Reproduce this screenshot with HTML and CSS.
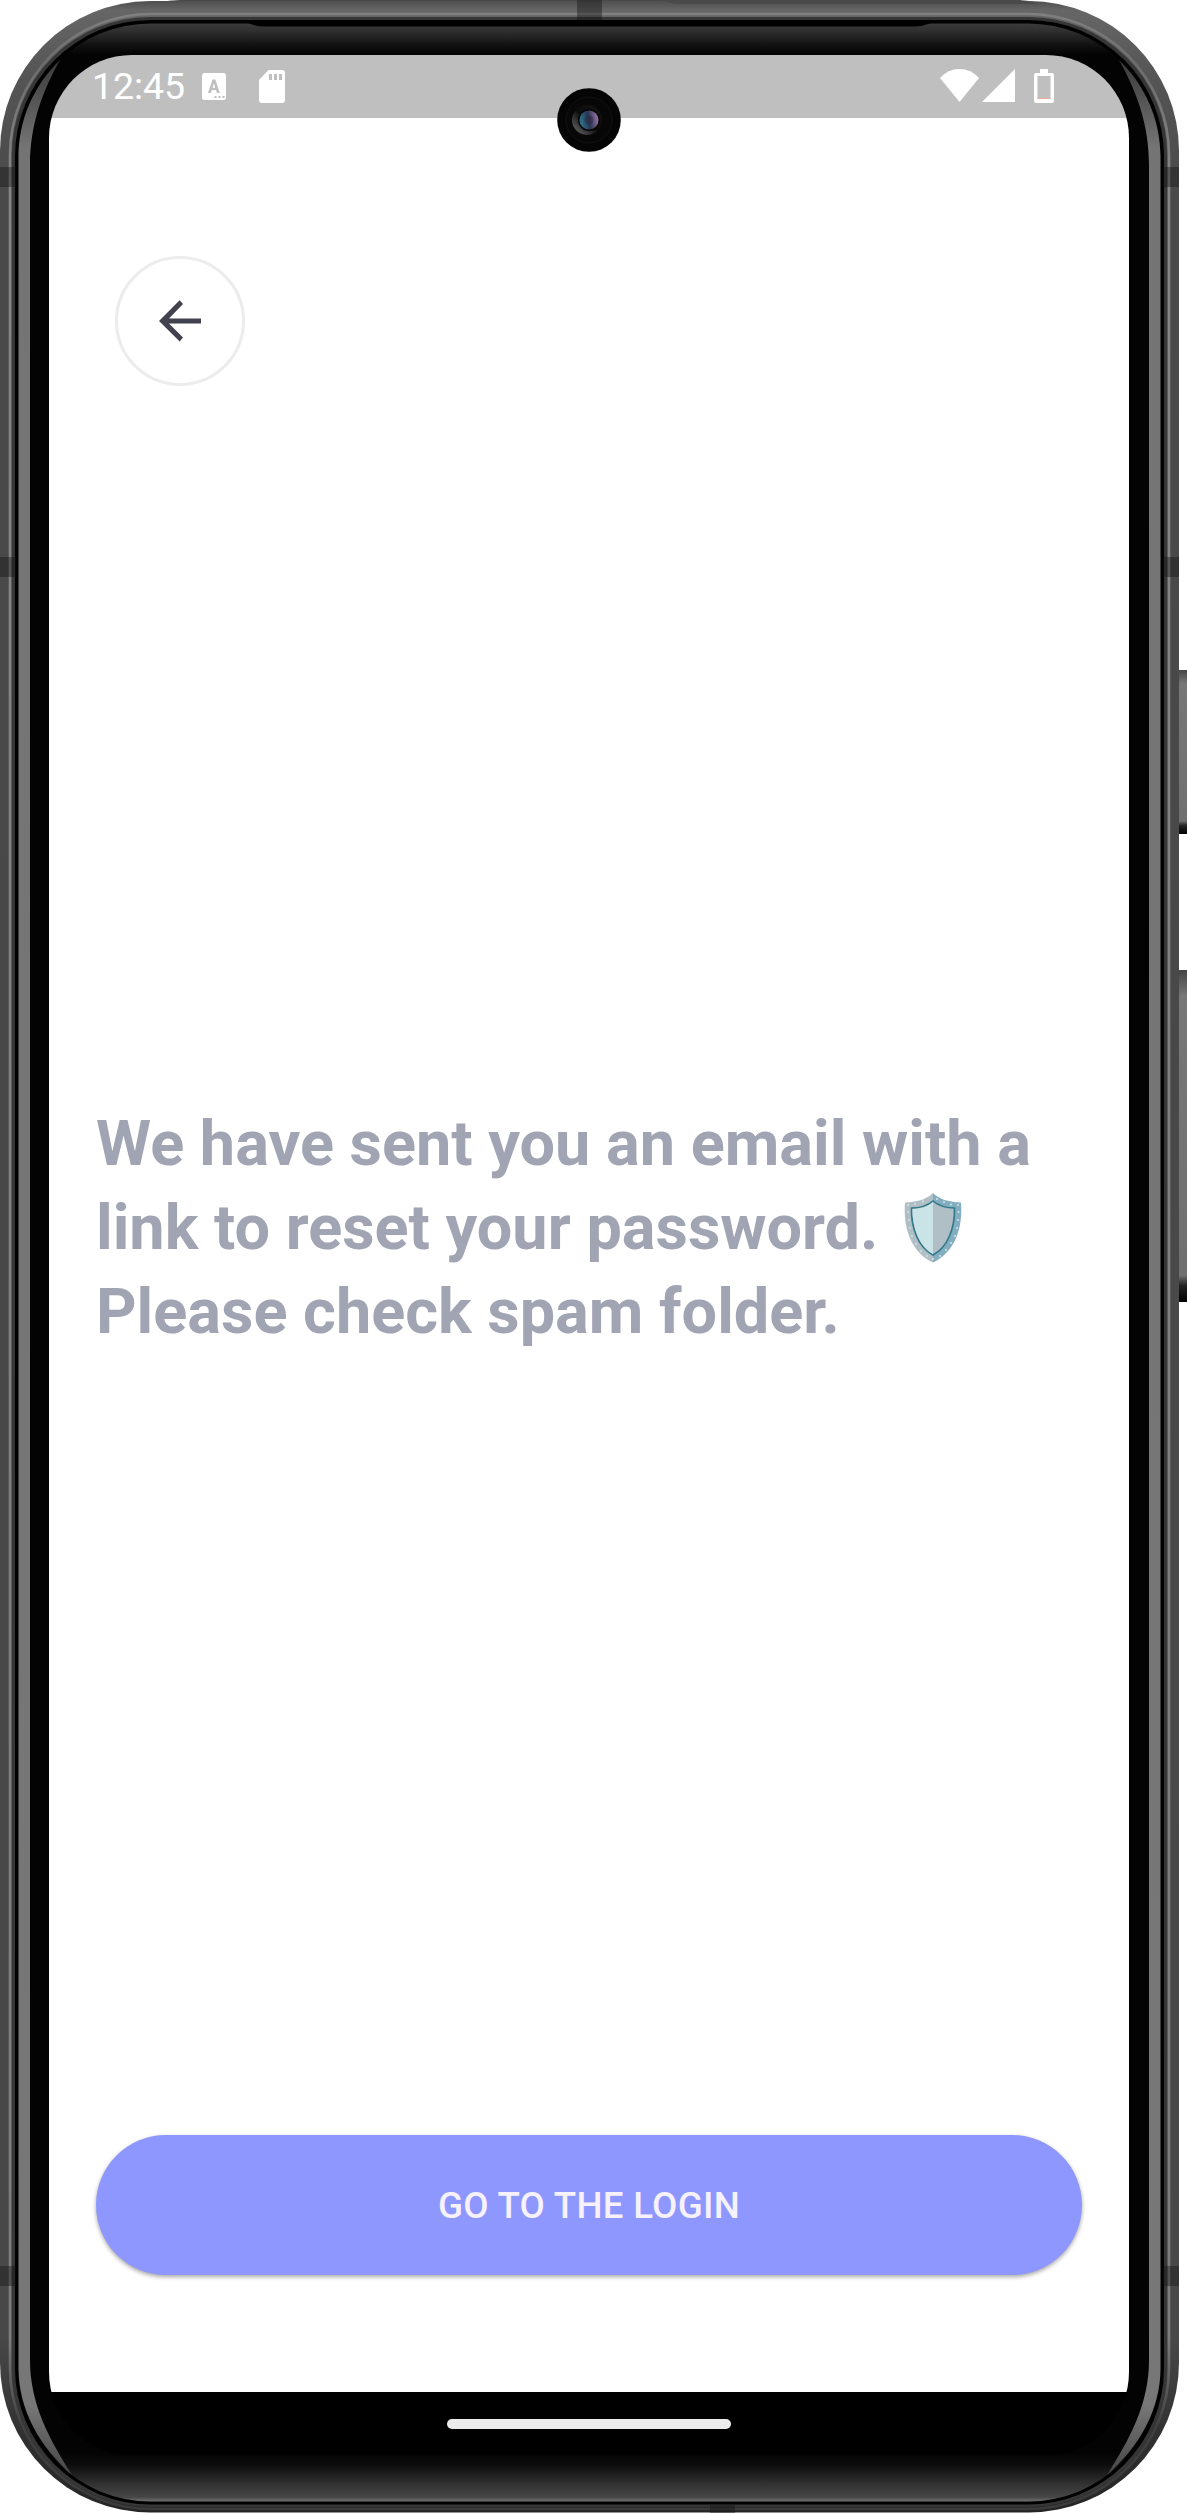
FILE: index.html
```html
<!DOCTYPE html>
<html lang="en">
<head>
<meta charset="utf-8">
<title>Reset password</title>
<link rel="stylesheet" href="styles.css">
</head>
<body>
<div class="device">
  <svg class="shell" viewBox="0 0 1187 2513" aria-hidden="true">
    <defs>
      <linearGradient id="edge" gradientUnits="userSpaceOnUse" x1="0" y1="0" x2="0" y2="2513">
        <stop offset="0" stop-color="#4c4c4c"/><stop offset=".004" stop-color="#666"/><stop offset=".03" stop-color="#555"/><stop offset=".08" stop-color="#494949"/>
        <stop offset=".93" stop-color="#484848"/><stop offset=".97" stop-color="#303030"/><stop offset="1" stop-color="#252525"/>
      </linearGradient>
      <linearGradient id="glint" gradientUnits="userSpaceOnUse" x1="0" y1="0" x2="0" y2="2513">
        <stop offset="0" stop-color="#858585"/><stop offset=".025" stop-color="#6d6d6d"/><stop offset=".07" stop-color="#858585"/>
        <stop offset=".93" stop-color="#7c7c7c"/><stop offset=".965" stop-color="#404040"/><stop offset="1" stop-color="#3b3b3b"/>
      </linearGradient>
      <linearGradient id="face" gradientUnits="userSpaceOnUse" x1="0" y1="23" x2="0" y2="2502">
        <stop offset="0" stop-color="#3b3b3b"/><stop offset=".003" stop-color="#303030"/><stop offset=".009" stop-color="#111"/><stop offset=".013" stop-color="#030303"/>
        <stop offset=".98" stop-color="#030303"/><stop offset=".985" stop-color="#0c0c0c"/><stop offset=".993" stop-color="#333"/><stop offset=".998" stop-color="#454545"/><stop offset="1" stop-color="#777"/>
      </linearGradient>
      <linearGradient id="rail" gradientUnits="userSpaceOnUse" x1="0" y1="50" x2="0" y2="2478">
        <stop offset="0" stop-color="#333"/><stop offset=".04" stop-color="#747474"/><stop offset=".97" stop-color="#777"/><stop offset="1" stop-color="#444"/>
      </linearGradient>
      <linearGradient id="key" x1="0" y1="0" x2="0" y2="1">
        <stop offset="0" stop-color="#444"/><stop offset=".08" stop-color="#777"/><stop offset=".92" stop-color="#707070"/><stop offset=".95" stop-color="#222"/><stop offset="1" stop-color="#000"/>
      </linearGradient>
    </defs>
    <rect x="1177" y="670" width="14" height="164" rx="3" fill="url(#key)"/>
    <rect x="1177" y="970" width="14" height="332" rx="3" fill="url(#key)"/>
    <path d="M160 3C168 0 175 0 190 0H1015C1023 0 1030 1 1040 3Z" fill="#4a4a4a"/>
    <rect x="0" y="1" width="1179" height="2511.500" rx="150" fill="url(#edge)"/>
    <path d="M660 0H1021V1Q1030 3 1040 4H675Z" fill="#4a4a4a"/>
    <rect x="12" y="17" width="1155" height="2490" rx="138" fill="#363636"/>
    <rect x="10" y="14" width="1159" height="2495" rx="141" fill="none" stroke="url(#glint)" stroke-width="2.600"/>
    <rect x="15" y="20" width="1149" height="2484.500" rx="136" fill="#000"/>
    <rect x="18" y="23.500" width="1143" height="2478" rx="133" fill="url(#face)"/>
    <path d="M248 23Q256 26.500 264 26.500H915Q923 26.500 931 23Z" fill="#000"/>
    <path id="band" d="M60 60C33 86 18.500 121 18.500 157V2368C18.500 2410 40 2447 72 2475C50 2440 30 2405 30 2360V165C30 125 42 92 60 60Z" fill="url(#rail)"/>
    <use href="#band" transform="matrix(-1 0 0 1 1179 0)"/>
    <g fill="#111" fill-opacity=".4">
      <path d="M0 167H16V187H0zM0 557H16V577H0zM0 2266H16V2286H0zM1163 167H1179V187H1163zM1163 557H1179V577H1163zM1163 2266H1179V2286H1163zM577 0H602V20H577zM710 2505H735V2513H710z"/>
    </g>
  </svg>

  <main class="screen">
    <header class="status">
      <span class="clock">12:45</span>
      <svg class="ico-lang" viewBox="0 0 24 27"><rect width="24" height="27" rx="2.500" fill="#fff"/><path d="M6 20L10.500 6.500H13.300L17.800 20H15L14 17H9.800L8.800 20ZM10.500 14.700H13.200L11.900 10.300Z" fill="#bfbfbf"/><path d="M12.500 23h2v2h-2zm4 0h2v2h-2zm4 0h2v2h-2z" fill="#bfbfbf"/></svg>
      <svg class="ico-card" viewBox="0 0 26 33"><path d="M9.500 0H23Q26 0 26 3V30Q26 33 23 33H3Q0 33 0 30V10Z" fill="#fff"/><path d="M10 4h3v6h-3zm5 0h3v6h-3zm5 0h3v6h-3z" fill="#bfbfbf"/></svg>
      <svg class="ico-wifi" viewBox="0 0 39 33"><path d="M0 9Q8 0 19.500 0T39 9L19.500 33Z" fill="#fff"/></svg>
      <svg class="ico-signal" viewBox="0 0 33 33"><path d="M33 0V33H0Z" fill="#fff"/></svg>
      <svg class="ico-battery" viewBox="0 0 20 34"><path fill-rule="evenodd" d="M6 0H14V4H18Q20 4 20 6V32Q20 34 18 34H2Q0 34 0 32V6Q0 4 2 4H6ZM3.500 7V30H16.500V7Z" fill="#fff"/><path d="M3.500 29H16.500V30H3.500Z" fill="#ecab9b"/></svg>
      <svg class="camera" viewBox="0 0 64 64">
        <defs>
          <linearGradient id="lens" x1="0" y1=".6" x2="1" y2=".4"><stop offset="0" stop-color="#2d7893"/><stop offset=".5" stop-color="#29344f"/><stop offset="1" stop-color="#a277ae"/></linearGradient>
          <linearGradient id="ring" x1="0" y1="1" x2="1" y2="0"><stop offset=".15" stop-color="#555"/><stop offset=".5" stop-color="#0b0b0b"/><stop offset="1" stop-color="#161616"/></linearGradient>
        </defs>
        <circle cx="32" cy="32" r="31.800" fill="#050505"/>
        <circle cx="32" cy="32" r="23" fill="#070707" stroke="#111"/>
        <circle cx="30" cy="32" r="15" fill="url(#ring)"/>
        <circle cx="32" cy="32" r="11" fill="#050505"/>
        <circle cx="32" cy="32" r="9.500" fill="url(#lens)"/>
        <circle cx="32" cy="32" r="4.500" fill="#29243f" fill-opacity=".4"/>
      </svg>
    </header>

    <section class="content">
      <button class="back" aria-label="Back">
        <svg viewBox="0 0 42 42"><path d="M42 18.500V23.500H10L24 37.500L20.700 41.500L0 21L20.700 .3L24 4L10 18.500Z" fill="#41414f"/></svg>
      </button>
      <p class="message">We have sent you an email with a<br>link to reset your password. <svg class="shield" viewBox="0 0 58 70"><defs><linearGradient id="rim"><stop offset=".5" stop-color="#b0bec5"/><stop offset=".5" stop-color="#82aec0"/></linearGradient></defs><path d="M29 0C36 7 46 9 57 9.500C59 35 51 59 29 69.500C7 59-1 35 1 9.500C12 9 22 7 29 0Z" fill="url(#rim)"/><path d="M29 8C35 13 42 15 50.500 15C51 36 43 55 29 62C15 55 7 36 7.500 15C16 15 23 13 29 8Z" fill="#b0bec5" stroke="#2f7889" stroke-width="1.600"/><path d="M29 9V61C16 54 8.500 36 8.500 16C16 16 23 14 29 9Z" fill="#c9e3e7"/><path d="M4 12h0M11 11h0M19 8.500h0M33 6h0M40 9h0M47 11.500h0M54 12h0M4 19h0M5 27h0M6 35h0M8 43h0M12 51h0M17 58h0M23 63h0M29 66h0M36 63h0M42 57h0M47 50h0M51 43h0M53 35h0M54 27h0M54.500 19h0" stroke="#d2e3e7" stroke-width="2" stroke-linecap="round"/></svg><br>Please check spam folder.</p>
      <button class="login">GO TO THE LOGIN</button>
    </section>
    <footer class="nav"><span class="handle"></span></footer>
  </main>
</div>
</body>
</html>
```
FILE: styles.css
```css
* { box-sizing: border-box; }

body {
  margin: 0;
  background: #fff;
  font-family: Roboto, "Liberation Sans", sans-serif;
}

.device {
  position: relative;
  width: 1187px;
  height: 2513px;
  padding: 55px 0 0 49px;
  overflow: hidden;
}

.shell {
  position: absolute;
  inset: 0;
  width: 1187px;
  height: 2513px;
}

.screen {
  position: relative;
  display: flex;
  flex-direction: column;
  width: 1080px;
  height: 2400px;
  clip-path: inset(0 round 83px);
}

.status {
  position: relative;
  display: flex;
  flex: none;
  height: 63px;
  padding-left: 43px;
  background: #bfbfbf;
}

.clock {
  width: 110px;
  font-size: 37.5px;
  line-height: 62px;
  letter-spacing: -0.1px;
  color: #fff;
}

.ico-lang { width: 24px; height: 27px; margin-top: 18px; }
.ico-card { width: 26px; height: 33px; margin: 15px 0 0 33px; }
.ico-wifi { width: 39px; height: 33px; margin: 14px 0 0 655px; }
.ico-signal { width: 33px; height: 33px; margin: 14px 0 0 3px; }
.ico-battery { width: 20px; height: 34px; margin: 14px 0 0 19px; }

.camera {
  position: absolute;
  top: 33px;
  left: 508px;
  width: 64px;
  height: 64px;
}

.content {
  display: flex;
  flex: 1;
  flex-direction: column;
  align-items: flex-start;
  padding: 138px 47px 117px;
  background: #fff;
}

.back {
  display: grid;
  flex: none;
  place-items: center;
  width: 130px;
  height: 130px;
  margin-left: 19px;
  padding: 0;
  border: 3px solid #ececec;
  border-radius: 50%;
  background: #fff;
}

.back svg { width: 42px; height: 42px; margin-top: -1px; }

.message {
  margin: 716px 0 auto;
  color: #a1a4b3;
  font-size: 63px;
  font-weight: 700;
  line-height: 84px;
  white-space: nowrap;
}

.shield {
  width: 58px;
  height: 70px;
  margin-left: 10px;
  vertical-align: -14px;
}

.login {
  flex: none;
  width: 986px;
  height: 140px;
  padding: 0;
  border: 0;
  border-radius: 70px;
  background: #8e97fd;
  box-shadow: 0 2px 4px rgba(0, 0, 0, 0.35);
  color: #f6f1fb;
  font: 500 36.7px Roboto, "Liberation Sans", sans-serif;
  letter-spacing: 0.3px;
}

.nav {
  display: flex;
  justify-content: center;
  flex: none;
  height: 63px;
  padding-top: 27px;
  background: #000;
}

.handle {
  width: 284px;
  height: 10px;
  border-radius: 5px;
  background: #ebebeb;
}
```
